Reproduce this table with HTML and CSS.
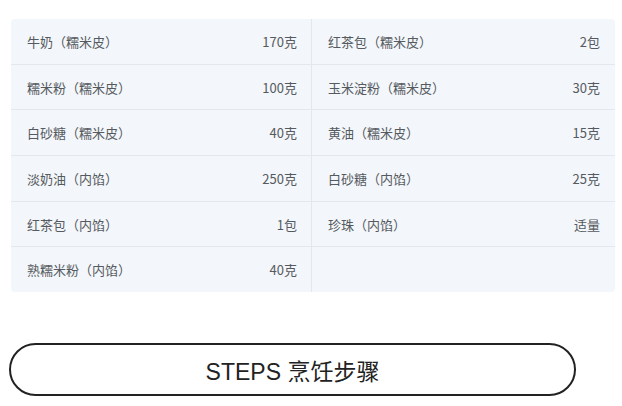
FILE: index.html
```html
<!DOCTYPE html>
<html lang="zh-CN">
<head>
<meta charset="utf-8">
<link rel="stylesheet" href="styles.css">
</head>
<body>
<div class="page">
  <div class="table">
    <div class="cell"><span>牛奶（糯米皮）</span><span>170克</span></div>
    <div class="cell"><span>红茶包（糯米皮）</span><span>2包</span></div>
    <div class="cell"><span>糯米粉（糯米皮）</span><span>100克</span></div>
    <div class="cell"><span>玉米淀粉（糯米皮）</span><span>30克</span></div>
    <div class="cell"><span>白砂糖（糯米皮）</span><span>40克</span></div>
    <div class="cell"><span>黄油（糯米皮）</span><span>15克</span></div>
    <div class="cell"><span>淡奶油（内馅）</span><span>250克</span></div>
    <div class="cell"><span>白砂糖（内馅）</span><span>25克</span></div>
    <div class="cell"><span>红茶包（内馅）</span><span>1包</span></div>
    <div class="cell"><span>珍珠（内馅）</span><span>适量</span></div>
    <div class="cell last"><span>熟糯米粉（内馅）</span><span>40克</span></div>
    <div class="cell last"></div>
  </div>
  <div class="steps">STEPS 烹饪步骤</div>
</div>
</body>
</html>
```
FILE: styles.css
```css
html, body {
  margin: 0;
  padding: 0;
  background: #ffffff;
}
.page {
  padding: 19px 0 0 11px;
  font-family: "Noto Sans CJK SC", "Noto Sans", sans-serif;
}
.table {
  width: 604px;
  display: grid;
  grid-template-columns: 301px 303px;
  background: #f3f6fa;
  border-radius: 4px;
  overflow: hidden;
}
.cell {
  height: 44.7px;
  border-bottom: 1px solid #e4e8ee;
  display: flex;
  align-items: center;
  justify-content: space-between;
  padding: 0 15px 0 16px;
  font-size: 13px;
  color: #555a60;
}
.cell:nth-child(odd) {
  border-right: 1px solid #e4e8ee;
  padding-right: 14px;
}
.cell.last {
  border-bottom: none;
}
.steps {
  margin: 51px 0 0 -2px;
  width: 563px;
  height: 49px;
  border: 2px solid #222;
  border-radius: 27px;
  display: flex;
  align-items: center;
  justify-content: center;
  font-family: "Liberation Sans", "Noto Sans CJK SC", sans-serif;
  font-size: 23px;
  color: #222;
}
```
